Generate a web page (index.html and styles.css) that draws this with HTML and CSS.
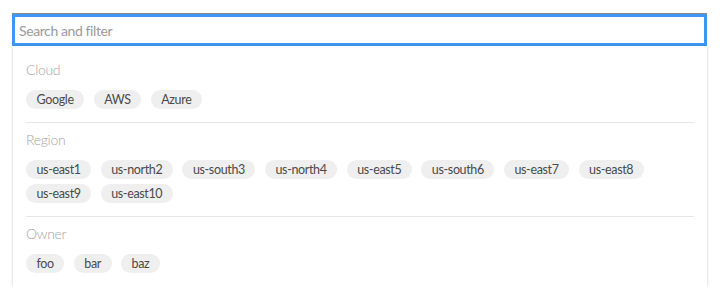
FILE: index.html
```html
<!DOCTYPE html>
<html lang="en">
<head>
  <meta charset="UTF-8">
  <meta name="viewport" content="width=device-width, initial-scale=1.0">
  <title>Search and filter</title>
  <link rel="stylesheet" href="styles.css">
</head>
<body>

<div class="filter">
  <input type="text" class="search-input" placeholder="Search and filter" autofocus>

  <div class="filter-panel">
    <!-- Cloud -->
    <div class="filter-group">
      <div class="group-title">Cloud</div>
      <div class="chip-list">
        <span class="chip">Google</span>
        <span class="chip">AWS</span>
        <span class="chip">Azure</span>
      </div>
    </div>

    <!-- Region -->
    <div class="filter-group">
      <div class="group-title">Region</div>
      <div class="chip-list">
        <span class="chip">us-east1</span>
        <span class="chip">us-north2</span>
        <span class="chip">us-south3</span>
        <span class="chip">us-north4</span>
        <span class="chip">us-east5</span>
        <span class="chip">us-south6</span>
        <span class="chip">us-east7</span>
        <span class="chip">us-east8</span>
        <span class="chip">us-east9</span>
        <span class="chip">us-east10</span>
      </div>
    </div>

    <!-- Owner -->
    <div class="filter-group">
      <div class="group-title">Owner</div>
      <div class="chip-list">
        <span class="chip">foo</span>
        <span class="chip">bar</span>
        <span class="chip">baz</span>
      </div>
    </div>
  </div>
</div>

</body>
</html>
```

FILE: styles.css
```css
body {
  font-family: "Lato", "Open Sans", sans-serif;
  background: #fff;
  color: #333;
  margin: 0;
  padding: 14px 0 0 12px;
}

.filter {
  width: 695px;
}

.search-input {
  display: block;
  box-sizing: border-box;
  width: 695px;
  height: 32px;
  margin: 0;
  padding: 0 4px;
  border: 3px solid #3e95f2;
  border-radius: 0;
  box-shadow: 0 -1px 0 #8a8a8a;
  outline: none;
  font-family: inherit;
  font-size: 14px;
  letter-spacing: -0.4px;
  color: #333;
  caret-color: #222;
}

.search-input::placeholder {
  color: #9a9a9a;
}

.filter-panel {
  margin-left: 1px;
  padding: 7px 13px 0;
  background: #fff;
  box-shadow: 0 1px 3px rgba(0, 0, 0, 0.2);
}

.filter-group {
  padding: 7px 0 13px;
  border-bottom: 1px solid #e6e6e6;
}

.filter-group:last-child {
  border-bottom: none;
}

.group-title {
  font-size: 14px;
  line-height: 20px;
  font-weight: 300;
  letter-spacing: -0.3px;
  color: #a3a3a3;
  margin-bottom: 10px;
}

.chip-list {
  display: flex;
  flex-wrap: wrap;
  gap: 5px 9.5px;
}

.chip {
  display: inline-block;
  height: 19px;
  line-height: 19px;
  padding: 0 10.5px;
  border-radius: 10px;
  background: #efefef;
  font-size: 12.5px;
  letter-spacing: -0.35px;
  color: #4a4a4a;
}
```
